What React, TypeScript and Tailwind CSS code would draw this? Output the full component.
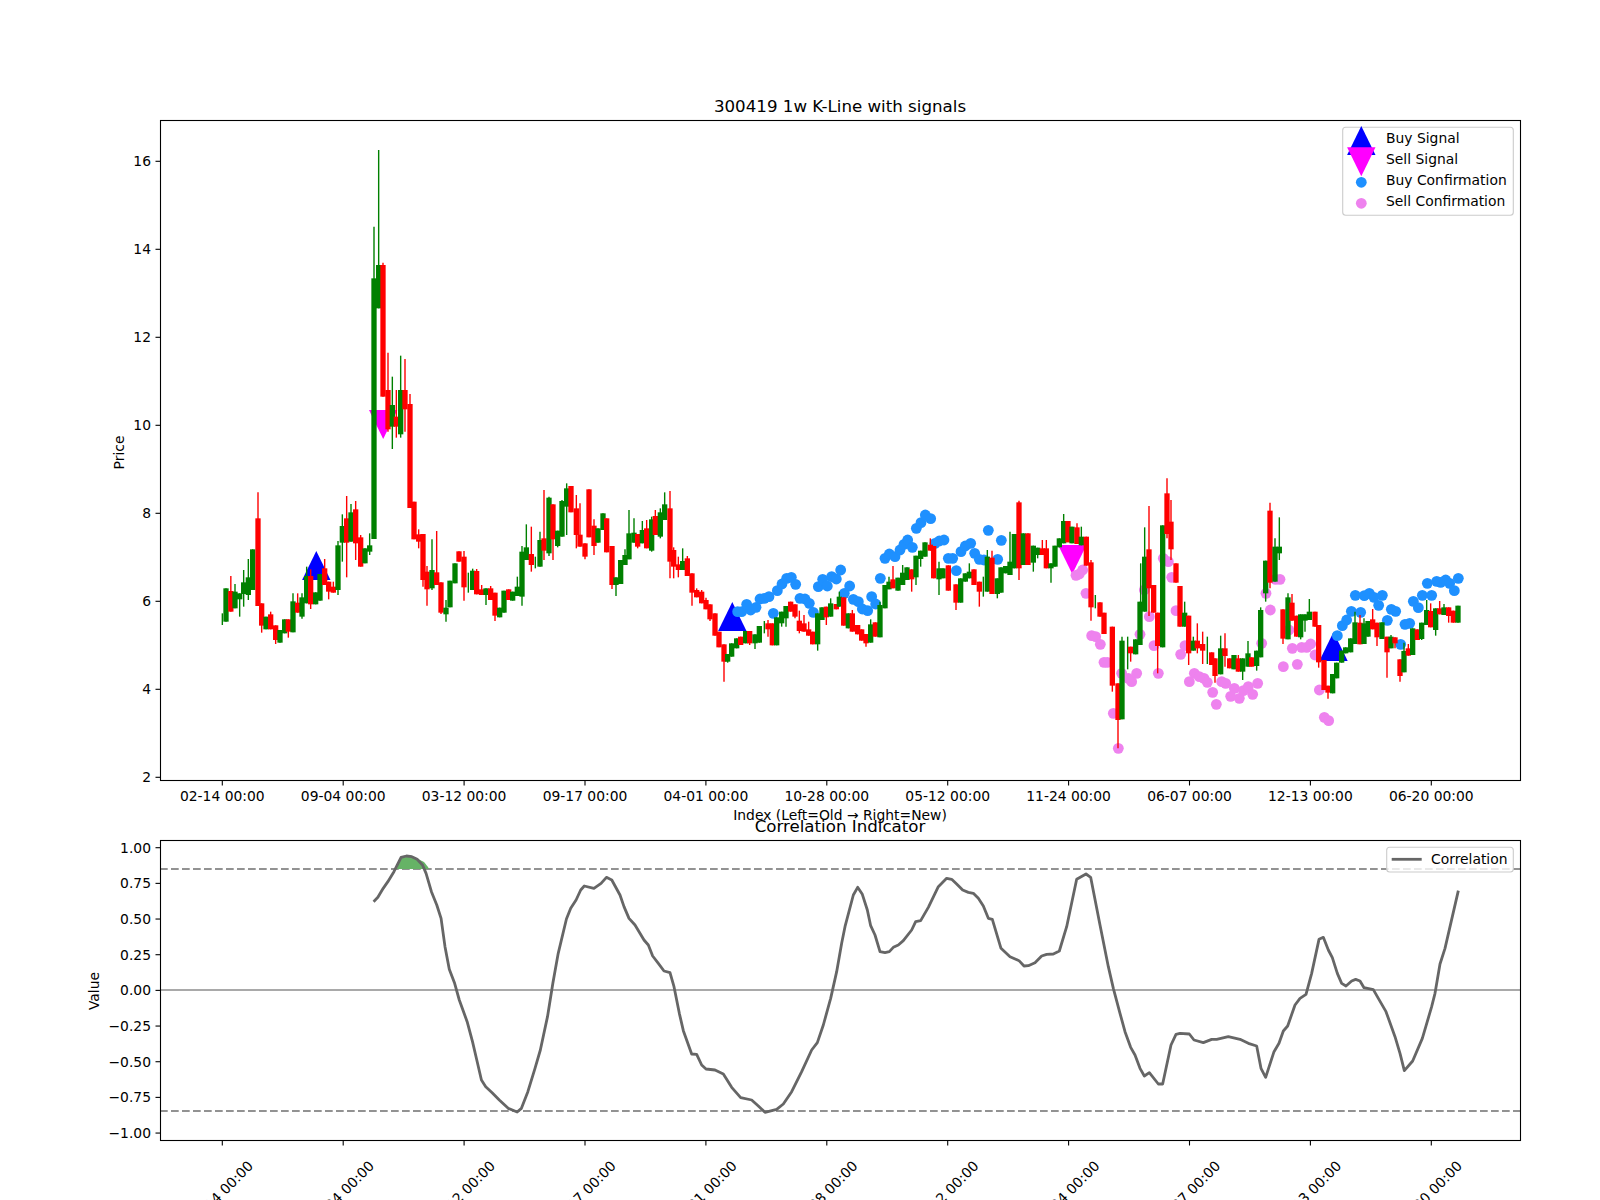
type Row = [string, number, number, number, number?, number?];
type Candle = { up: boolean; x: number; top: number; bot: number; high: number; low: number };

// rows are read off crops of the chart, so each block has its own origin
function seg(ox: number, oy: number, rows: Row[], sx = 3): Candle[] {
  return rows.map(([c, x, t, b, wt, wb]) => ({
    up: c === "g",
    x: ox + x / sx,
    top: oy + t / 3,
    bot: oy + b / 3,
    high: oy + Math.min(t, wt ?? t) / 3,
    low: oy + Math.max(b, wb ?? b) / 3,
  }));
}

const CANDLES: Candle[] = [
  ...seg(200, 460, [
    ["g", 67, 478, 478, 460, 495], ["g", 78, 385, 485], ["r", 92.5, 393, 455, 348], ["g", 105, 395, 445, 372],
    ["g", 119, 400, 418, 400, 470], ["g", 131, 367, 402, 330, 440], ["g", 145, 352, 405, 297, 420], ["g", 158, 268, 390],
    ["r", 174, 175, 438, 97], ["r", 185, 430, 497, 430, 518], ["g", 198, 470, 508], ["r", 212, 463, 508, 455],
    ["r", 227, 496, 540, 496, 552], ["g", 240, 510, 548], ["g", 254, 478, 520], ["r", 265, 478, 515, 478, 533],
    ["g", 279, 424, 517, 400], ["r", 293, 428, 458, 400], ["g", 306, 412, 470, 400, 476], ["g", 320, 348, 430, 320],
    ["r", 332, 348, 433, 328, 447], ["g", 347, 397, 433], ["g", 360, 342, 422], ["r", 374, 325, 375, 297],
    ["r", 386, 365, 395, 365, 418], ["r", 400, 380, 398, 365], ["g", 414, 256, 390, 243, 405], ["g", 427, 198, 248, 163, 305],
    ["r", 440, 175, 248, 108, 352], ["g", 453, 157, 245, 132], ["r", 467, 148, 250, 123, 300], ["r", 482, 232, 320, 225],
    ["g", 495, 265, 310], ["g", 509, 256, 275, 220, 285],
  ]),
  ...seg(140, 90, [
    ["g", 702, 565, 1347, 410], ["g", 716, 525, 655, 180], ["r", 729, 525, 920, 518], ["r", 744, 900, 1018, 788, 1025],
    ["g", 757, 945, 1010, 860, 1077], ["r", 769, 980, 1010, 900, 1043], ["g", 782, 900, 1033, 797, 1043],
    ["r", 795, 900, 958, 807, 1025], ["r", 810, 942, 1254, 912],
  ]),
  ...seg(200, 460, [
    ["r", 642, 125, 238], ["r", 656, 223, 245, 208, 265], ["r", 669, 222, 360, 222, 380], ["r", 681, 335, 388, 318, 437],
    ["g", 696, 330, 385, 238, 390], ["r", 710, 337, 375, 213], ["r", 723, 367, 458, 367, 462], ["g", 738, 443, 463, 420, 485],
    ["g", 750, 362, 442], ["g", 765, 310, 370], ["r", 777, 274, 305], ["r", 792, 290, 382, 273, 422],
    ["g", 805, 368, 368, 338, 398], ["g", 818, 332, 390, 326], ["r", 830, 333, 403, 327], ["r", 845, 388, 405, 375],
    ["g", 858, 385, 405, 385, 435], ["r", 872, 385, 420, 378], ["r", 885, 398, 467, 398, 483], ["g", 899, 443, 472],
    ["g", 912, 392, 458], ["r", 926, 388, 420], ["g", 938, 395, 422], ["g", 952, 380, 408, 350], ["g", 966, 275, 410, 258, 437],
    ["g", 979, 262, 300, 193], ["r", 994, 282, 315, 200, 335], ["g", 1006, 305, 305, 290, 325], ["g", 1020, 240, 320, 215],
    ["r", 1032, 235, 272, 90, 300], ["g", 1047, 113, 280, 110, 288], ["r", 1059, 133, 238, 133, 300], ["g", 1073, 212, 258, 212, 262],
    ["g", 1086, 123, 230, 120], ["g", 1100, 85, 140, 70, 225], ["r", 1113, 78, 157], ["r", 1129, 145, 225, 105, 265],
    ["r", 1140, 224, 260, 130], ["r", 1155, 250, 290, 250, 298], ["r", 1167, 88, 232], ["r", 1182, 197, 258, 178, 285],
    ["g", 1194, 205, 248], ["g", 1209, 160, 210], ["r", 1220, 175, 277], ["r", 1236, 258, 375, 258, 387],
    ["g", 1248, 352, 375, 352, 408], ["g", 1262, 300, 372], ["g", 1275, 285, 315, 268], ["g", 1287, 220, 298, 150],
    ["g", 1302, 218, 248, 175], ["r", 1313, 222, 260, 222, 265], ["g", 1327, 210, 250, 183], ["r", 1340, 205, 265, 180],
    ["g", 1355, 178, 272, 170, 275], ["r", 1366, 168, 225, 150], ["g", 1381, 157, 230, 145, 235], ["g", 1394, 133, 180, 97],
    ["r", 1410, 145, 305, 93, 355], ["r", 1421, 270, 320, 262, 355], ["r", 1435, 313, 330, 290, 352], ["g", 1448, 303, 330, 265],
    ["r", 1462, 295, 348, 288], ["r", 1476, 340, 398, 340, 437], ["r", 1490, 390, 412, 385],
  ]),
  ...seg(700, 460, [
    ["r", 5, 395, 430, 390], ["r", 18, 420, 448, 413], ["r", 30, 433, 478, 433, 483], ["r", 45, 460, 527], ["r", 57, 515, 562],
    ["r", 72, 553, 605, 553, 665], ["g", 83, 582, 605, 582, 608], ["g", 95, 550, 590], ["g", 110, 535, 565], ["r", 122, 530, 555],
    ["g", 137, 513, 550], ["r", 149, 513, 550, 513, 555], ["g", 165, 523, 550, 523, 567], ["g", 178, 498, 548],
    ["g", 193, 500, 500, 483, 520], ["r", 204, 490, 508, 480, 530], ["r", 217, 490, 556], ["g", 230, 472, 556],
    ["g", 245, 455, 490, 455, 500], ["g", 258, 438, 475, 438, 500], ["r", 272, 425, 455], ["r", 285, 433, 470, 433, 475],
    ["r", 298, 482, 513, 452, 520], ["r", 312, 490, 515, 465], ["r", 326, 508, 527, 485], ["r", 338, 515, 553],
    ["g", 353, 460, 553, 460, 572], ["g", 366, 442, 480], ["r", 379, 440, 472, 440, 495], ["g", 392, 430, 470, 415],
    ["r", 409, 432, 448], ["g", 418, 410, 440, 395], ["r", 431, 412, 497], ["g", 445, 460, 505], ["r", 457, 460, 515, 450],
    ["r", 473, 495, 523], ["r", 485, 508, 542], ["r", 498, 522, 550, 522, 560], ["g", 512, 493, 548, 478], ["r", 526, 487, 530],
    ["g", 540, 435, 532, 425], ["g", 555, 375, 445], ["g", 567, 365, 388, 350], ["r", 579, 358, 385, 318], ["g", 594, 353, 392],
    ["g", 608, 338, 375, 315], ["g", 621, 322, 360], ["r", 635, 328, 358, 328, 395], ["g", 648, 287, 352, 287, 375],
    ["g", 662, 272, 297, 272, 320], ["g", 675, 247, 290], ["r", 691, 254, 272, 235], ["r", 701, 258, 355],
    ["g", 717, 325, 358, 305, 405], ["g", 729, 325, 355], ["r", 745, 316, 392], ["r", 768, 373, 428, 373, 450], ["g", 782, 355, 428],
    ["g", 796, 340, 365], ["g", 808, 335, 355, 310], ["r", 822, 328, 375], ["r", 838, 365, 395, 365, 440], ["g", 850, 380, 380, 350, 410],
    ["g", 862, 290, 395, 270], ["r", 876, 293, 402, 272], ["g", 892, 355, 402, 355, 415], ["g", 903, 322, 398], ["g", 917, 318, 340],
    ["g", 930, 305, 345, 215], ["g", 943, 222, 325], ["r", 957, 127, 325, 122, 360], ["g", 970, 220, 315], ["r", 984, 220, 315],
    ["g", 1000, 257, 308, 257, 335], ["g", 1013, 263, 285, 263, 295], ["r", 1027, 265, 285, 240], ["r", 1039, 265, 325, 240],
    ["g", 1053, 310, 325, 310, 368], ["g", 1065, 257, 320], ["g", 1078, 235, 262], ["g", 1091, 183, 250, 162], ["r", 1104, 183, 247],
    ["g", 1116, 200, 250], ["r", 1131, 202, 252, 190], ["g", 1144, 230, 256, 200], ["r", 1159, 230, 317], ["r", 1173, 307, 442, 300, 482],
    ["g", 1186, 425, 425, 405, 445], ["r", 1200, 427, 470], ["r", 1212, 458, 522], ["r", 1237, 500, 677, 500, 695],
    ["r", 1254, 670, 780, 670, 865], ["g", 1266, 542, 778, 530], ["g", 1283, 580, 580, 530, 628], ["r", 1292, 560, 580, 560, 605],
    ["g", 1307, 538, 583], ["g", 1322, 400, 400, 310, 500], ["g", 1320, 425, 555], ["g", 1334, 290, 455, 202], ["r", 1347, 268, 385, 138, 468],
    ["r", 1361, 375, 458], ["r", 1373, 458, 558, 458, 640], ["g", 1388, 196, 562], ["r", 1401, 100, 222, 55, 235],
    ["r", 1413, 185, 268, 120, 300], ["r", 1428, 310, 368], ["r", 1440, 378, 500], ["g", 1454, 458, 500, 425], ["r", 1466, 467, 580, 467, 615],
  ]),
  ...seg(1080, 440, [
    ["g", 340, 602, 632, 590], ["r", 352, 602, 625, 550, 640], ["r", 368, 612, 632, 575, 672], ["g", 382, 630, 630, 590, 672],
    ["r", 395, 637, 675], ["r", 405, 655, 708, 655, 728], ["g", 422, 625, 703, 587], ["r", 435, 625, 648, 580, 680], ["r", 449, 655, 685],
    ["g", 462, 645, 688], ["r", 475, 655, 695, 645], ["g", 488, 655, 695, 655, 720], ["g", 504, 640, 680, 603], ["r", 515, 652, 680],
    ["g", 530, 632, 678, 632, 692], ["g", 542, 510, 652, 502], ["g", 557, 362, 460, 362, 485], ["r", 570, 212, 428, 188, 445],
    ["g", 585, 320, 425, 295], ["g", 598, 320, 340, 232, 360], ["r", 609, 508, 596, 508, 612], ["g", 624, 472, 598, 460],
    ["r", 636, 488, 542, 462], ["r", 650, 527, 590], ["g", 662, 523, 592, 523, 598], ["g", 675, 523, 542, 523, 575], ["g", 688, 515, 540, 477],
    ["r", 705, 515, 560], ["r", 716, 555, 667, 555, 683], ["r", 732, 660, 750], ["r", 744, 737, 758, 737, 776], ["g", 758, 702, 760],
    ["g", 770, 668, 715], ["g", 785, 632, 668], ["g", 797, 622, 640], ["g", 812, 595, 637], ["g", 825, 547, 612, 515], ["r", 840, 548, 613, 525],
    ["g", 852, 550, 612, 535], ["g", 864, 543, 590], ["r", 878, 538, 568, 507], ["r", 891, 548, 592, 548, 618], ["g", 906, 547, 597],
    ["r", 921, 590, 637, 590, 713], ["g", 933, 590, 625, 585], ["r", 945, 592, 610, 592, 625], ["r", 960, 658, 708, 658, 725],
    ["g", 972, 633, 697, 608], ["r", 985, 625, 647, 612], ["g", 998, 565, 645], ["r", 1012, 568, 600], ["g", 1025, 548, 597, 548, 600],
    ["g", 1040, 510, 555, 480], ["r", 1052, 513, 562, 490], ["g", 1067, 505, 570, 505, 587], ["r", 1079, 505, 523, 483], ["g", 1092, 502, 525, 492],
    ["r", 1106, 502, 528, 502, 548], ["r", 1120, 512, 548], ["g", 1134, 497, 548],
  ]),
];

const pts = (ox: number, oy: number, list: number[][], sx = 3) => list.map(([x, y]) => [ox + x / sx, oy + y / 3]);

const BUY_DOTS = [
  ...pts(700, 460, [[113, 455], [125, 455], [140, 433], [152, 450], [168, 442], [180, 417], [193, 415], [207, 410], [220, 460], [232, 392], [246, 372], [260, 355], [274, 352], [287, 373], [300, 415], [315, 417], [328, 430], [340, 457], [355, 380], [368, 358], [382, 378], [395, 350], [409, 357], [422, 330], [433, 400], [449, 378], [460, 418], [475, 425], [487, 447], [503, 452], [515, 410], [527, 432], [541, 355], [555, 295], [568, 282], [585, 290], [600, 270], [612, 253], [623, 240], [637, 262], [649, 205], [663, 188], [676, 165], [692, 176], [705, 250], [718, 243], [732, 240], [745, 295], [758, 295], [769, 332], [783, 275], [796, 258], [812, 250], [824, 280], [838, 298], [852, 300], [865, 211], [893, 298], [904, 241]]),
  ...pts(1080, 440, [[772, 587], [787, 557], [800, 540], [814, 514], [842, 517], [826, 466], [853, 467], [868, 460], [882, 472], [896, 496], [907, 466], [922, 541], [934, 508], [947, 514], [962, 613], [975, 553], [989, 550], [1000, 484], [1015, 503], [1027, 466], [1042, 430], [1055, 466], [1070, 424], [1082, 427], [1097, 420], [1109, 430], [1123, 452], [1135, 415]]),
];

const SELL_DOTS = pts(1080, 440, [[-12, 406], [-2, 402], [8, 390], [18, 460], [35, 587], [47, 590], [61, 613], [72, 667], [82, 667], [100, 820], [115, 925], [125, 700], [145, 715], [155, 725], [170, 700], [180, 583], [208, 530], [193, 450], [222, 617], [235, 700], [250, 355], [265, 365], [275, 412], [288, 512], [315, 617], [302, 643], [328, 725], [343, 700], [358, 710], [372, 715], [382, 727], [398, 757], [409, 793], [425, 725], [437, 730], [452, 769], [463, 745], [478, 775], [490, 752], [505, 740], [518, 763], [533, 730], [545, 610], [558, 460], [571, 510], [587, 418], [600, 418], [610, 680], [627, 570], [637, 625], [652, 673], [665, 622], [680, 622], [692, 612], [705, 645], [718, 750], [733, 832], [746, 842]]);

const CORR = [
  ...pts(60, 770, [[878, 395], [890, 382], [905, 355], [918, 335], [935, 305], [955, 262], [970, 258], [985, 260], [1000, 268], [1015, 285], [1025, 310], [1040, 365], [1055, 405], [1067, 445], [1078, 530], [1090, 598], [1105, 640], [1118, 690], [1140, 755], [1155, 815], [1167, 870], [1180, 930], [1192, 950], [1210, 968], [1230, 990], [1255, 1015], [1280, 1026], [1292, 1015], [1310, 965], [1330, 895], [1345, 840], [1365, 740], [1380, 640], [1395, 550], [1418, 447], [1430, 415], [1445, 390], [1458, 360], [1468, 348], [1495, 355], [1515, 340], [1530, 322], [1545, 330]], 2.8),
  ...pts(620, 770, [[0, 375], [12, 410], [27, 445], [45, 465], [72, 510], [85, 525], [98, 558], [115, 580], [132, 603], [150, 608], [162, 650], [178, 730], [190, 782], [215, 852], [230, 853], [245, 885], [258, 897], [285, 900], [310, 912], [335, 952], [362, 983], [395, 990], [415, 1008], [435, 1027], [470, 1018], [490, 1002], [515, 965], [545, 905], [575, 840], [592, 818], [610, 765], [632, 685], [650, 605], [665, 520], [675, 470], [700, 375], [713, 352], [727, 373], [742, 420], [752, 467], [765, 495], [780, 545], [795, 548], [808, 545], [820, 532], [835, 525], [850, 512], [875, 480], [887, 455], [902, 452], [925, 412], [955, 350], [980, 325], [995, 328], [1010, 342], [1028, 360], [1045, 367], [1060, 370], [1075, 385], [1090, 408], [1105, 445], [1117, 448], [1143, 535], [1170, 560], [1197, 572], [1212, 588], [1225, 587], [1245, 578], [1265, 558], [1280, 553], [1300, 552], [1318, 543], [1340, 470], [1370, 328], [1398, 312], [1412, 322], [1440, 465], [1465, 590], [1480, 655]]),
  ...pts(1100, 800, [[60, 640], [75, 695], [92, 742], [105, 765], [120, 805], [133, 828], [148, 818], [175, 852], [188, 852], [213, 735], [228, 703], [240, 700], [268, 702], [282, 720], [310, 728], [335, 718], [350, 718], [385, 710], [420, 718], [445, 730], [470, 738], [483, 805], [497, 832], [522, 755], [537, 730], [550, 693], [563, 678], [585, 615], [600, 595], [618, 583], [635, 520], [657, 418], [670, 412], [685, 450], [697, 473], [712, 520], [725, 550], [738, 558], [755, 543], [767, 538], [780, 543], [792, 563], [820, 569], [835, 595], [858, 635], [885, 710], [900, 760], [913, 812], [938, 783], [967, 715], [995, 620], [1005, 580], [1020, 492], [1035, 445], [1075, 272]]),
];

const DATES = ["02-14", "09-04", "03-12", "09-17", "04-01", "10-28", "05-12", "11-24", "06-07", "12-13", "06-20"];
const XTICKS = DATES.map((d, i) => ({ label: `${d} 00:00`, x: 222.3 + i * 120.9 }));
const PRICE_TICKS = [16, 14, 12, 10, 8, 6, 4, 2].map((v) => ({ label: String(v), y: 425.3 - (v - 10) * 44 }));
const CORR_TICKS = ["1.00", "0.75", "0.50", "0.25", "0.00", "−0.25", "−0.50", "−0.75", "−1.00"].map((label, i) => ({
  label,
  y: 847.7 + i * 35.67,
}));

const labelCls = "fill-black text-[13.89px]";
const dash = "7.7 3.3";

function Tri({ x, y, down }: { x: number; y: number; down?: boolean }) {
  // y is the flat side of the marker
  const tip = down ? y + 29 : y - 29;
  return <polygon points={`${x - 14.2},${y} ${x + 14.2},${y} ${x},${tip}`} fill={down ? "#ff00ff" : "#0000ff"} />;
}

export default function App() {
  return (
    <div className="h-[1200px] w-[1600px] overflow-hidden bg-white font-['DejaVu_Sans',sans-serif]">
      <svg width="1600" height="1200" viewBox="0 0 1600 1200" className="block">
        {/* price panel */}
        <Tri x={316.3} y={580} />
        <Tri x={732.3} y={631} />
        <Tri x={1333.5} y={661} />
        <Tri x={383.2} y={410} down />
        <Tri x={1072.3} y={545} down />
        {BUY_DOTS.map(([x, y], i) => (
          <circle key={i} cx={x} cy={y} r={5.4} fill="#1e90ff" />
        ))}
        {SELL_DOTS.map(([x, y], i) => (
          <circle key={i} cx={x} cy={y} r={5.4} fill="#ee82ee" />
        ))}
        {CANDLES.map((c, i) => {
          const color = c.up ? "#008000" : "#ff0000";
          return (
            <g key={i}>
              <line x1={c.x} x2={c.x} y1={c.high} y2={c.low} stroke={color} strokeWidth={1.4} />
              {c.bot > c.top && <rect x={c.x - 2.65} y={c.top} width={5.3} height={c.bot - c.top} fill={color} />}
            </g>
          );
        })}
        <rect x={160.5} y={120.5} width={1360} height={660} fill="none" stroke="#000" strokeWidth={1.1} />
        {XTICKS.map((t) => (
          <g key={t.x}>
            <line x1={t.x} x2={t.x} y1={781} y2={785.5} stroke="#000" strokeWidth={1.1} />
            <text x={t.x} y={801} textAnchor="middle" className={labelCls}>{t.label}</text>
          </g>
        ))}
        {PRICE_TICKS.map((t) => (
          <g key={t.label}>
            <line x1={155.5} x2={160} y1={t.y} y2={t.y} stroke="#000" strokeWidth={1.1} />
            <text x={151} y={t.y + 5} textAnchor="end" className={labelCls}>{t.label}</text>
          </g>
        ))}
        <text x={840} y={112} textAnchor="middle" className="fill-black text-[16.67px]">300419 1w K-Line with signals</text>
        <text x={840} y={820} textAnchor="middle" className={labelCls}>Index (Left=Old → Right=New)</text>
        <text transform="translate(124 452.5) rotate(-90)" textAnchor="middle" className={labelCls}>Price</text>

        {/* legend */}
        <rect x={1342.7} y={127.3} width={170.6} height={88} rx={3} fill="#fff" fillOpacity={0.8} stroke="#cccccc" strokeWidth={1.1} />
        <Tri x={1361.3} y={155} />
        <Tri x={1361.3} y={147.3} down />
        <circle cx={1361.3} cy={182.3} r={5.4} fill="#1e90ff" />
        <circle cx={1361.3} cy={203.3} r={5.4} fill="#ee82ee" />
        <text x={1386} y={143} className={labelCls}>Buy Signal</text>
        <text x={1386} y={164} className={labelCls}>Sell Signal</text>
        <text x={1386} y={185} className={labelCls}>Buy Confirmation</text>
        <text x={1386} y={206} className={labelCls}>Sell Confirmation</text>

        {/* correlation panel */}
        <line x1={160} x2={1520} y1={990} y2={990} stroke="#a9a9a9" strokeWidth={2.1} />
        <line x1={160} x2={1520} y1={869} y2={869} stroke="#929292" strokeWidth={2.1} strokeDasharray={dash} />
        <line x1={160} x2={1520} y1={1111} y2={1111} stroke="#929292" strokeWidth={2.1} strokeDasharray={dash} />
        <polygon points="396.5,869 401,857 406,856 412,856 418,859 424,862 428,867 429,869" fill="#66b366" />
        <polyline points={CORR.map((p) => p.join(",")).join(" ")} fill="none" stroke="#666666" strokeWidth={2.8} strokeLinejoin="round" />
        <rect x={160.5} y={840.5} width={1360} height={300} fill="none" stroke="#000" strokeWidth={1.1} />
        {XTICKS.map((t) => (
          <g key={t.x}>
            <line x1={t.x} x2={t.x} y1={1141} y2={1145.5} stroke="#000" strokeWidth={1.1} />
            <text transform={`translate(${t.x - 1} 1194) rotate(-45)`} textAnchor="middle" dominantBaseline="middle" className={labelCls}>{t.label}</text>
          </g>
        ))}
        {CORR_TICKS.map((t) => (
          <g key={t.label}>
            <line x1={155.5} x2={160} y1={t.y} y2={t.y} stroke="#000" strokeWidth={1.1} />
            <text x={151} y={t.y + 5} textAnchor="end" className={labelCls}>{t.label}</text>
          </g>
        ))}
        <text x={840} y={832} textAnchor="middle" className="fill-black text-[16.67px]">Correlation Indicator</text>
        <text transform="translate(99 991) rotate(-90)" textAnchor="middle" className={labelCls}>Value</text>

        <rect x={1386.7} y={847.3} width={126.6} height={24.7} rx={3} fill="#fff" fillOpacity={0.8} stroke="#cccccc" strokeWidth={1.1} />
        <line x1={1391.7} x2={1421.7} y1={859.3} y2={859.3} stroke="#666666" strokeWidth={2.8} />
        <text x={1431} y={864} className={labelCls}>Correlation</text>
      </svg>
    </div>
  );
}
